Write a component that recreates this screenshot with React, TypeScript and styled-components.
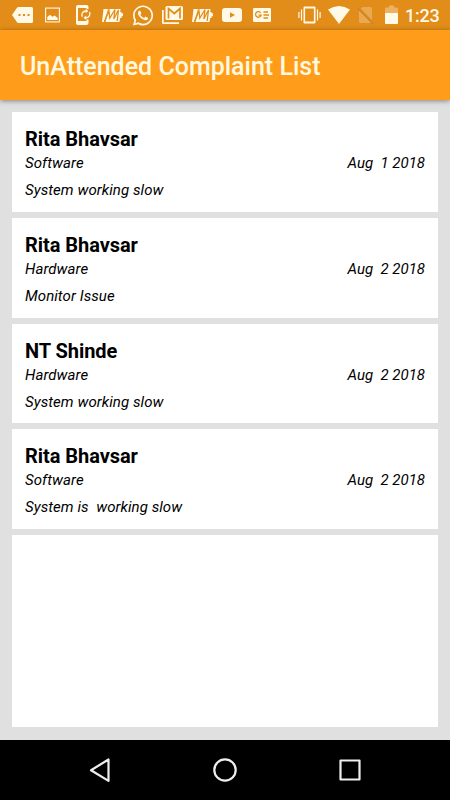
import React from "react";
import styled, { createGlobalStyle } from "styled-components";
import { FaWhatsapp } from "react-icons/fa";

const GlobalStyle = createGlobalStyle`
  * { box-sizing: border-box; }
  body { margin: 0; background: #e0e0e0; font-family: Roboto, sans-serif; }
`;

const Screen = styled.div`
  width: 450px;
  height: 800px;
  display: flex;
  flex-direction: column;
  background: #e0e0e0;
  overflow: hidden;
`;

const StatusBar = styled.div`
  flex: none;
  height: 30px;
  display: flex;
  align-items: center;
  padding-left: 12px;
  background: #e28d19;
  color: #fff9e8;
`;

const StatusIcon = styled.svg<{ $w: number; $gap?: number }>`
  flex: none;
  display: block;
  width: ${(p) => p.$w}px;
  height: 30px;
  margin-left: ${(p) => p.$gap ?? 0}px;
  fill: currentColor;
`;

const WhatsAppIcon = styled(FaWhatsapp)`
  flex: none;
  width: 22px;
  height: 23px;
  margin-left: 8px;
`;

const Clock = styled.div`
  margin-left: 7px;
  padding-top: 2px;
  font-size: 18px;
  line-height: 28px;
  font-weight: 500;
  letter-spacing: -0.2px;
  white-space: nowrap;
`;

const AppBar = styled.header`
  flex: none;
  height: 70px;
  display: flex;
  align-items: center;
  padding: 3px 20px 0;
  background: #ff9d1a;
  box-shadow: 0 1px 5px rgba(0, 0, 0, 0.42);
  z-index: 1;
`;

const Title = styled.h1`
  margin: 0;
  font-size: 25px;
  line-height: 30px;
  font-weight: 500;
  color: #fff9e0;
  white-space: nowrap;
`;

const List = styled.main`
  flex: 1;
  display: flex;
  flex-direction: column;
  gap: 6px;
  padding: 12.4px 12.5px 12.6px 12px;
`;

const Card = styled.article`
  flex: none;
  height: 99.6px;
  padding: 15px 12.5px 0 13px;
  background: #fff;
  color: #000;
`;

const EmptyCard = styled.div`
  flex: 1;
  background: #fff;
`;

const Name = styled.h2`
  margin: 0;
  font-size: 20px;
  line-height: 24px;
  font-weight: 700;
  letter-spacing: -0.05px;
`;

const Meta = styled.div`
  display: flex;
  justify-content: space-between;
  margin-top: 1px;
`;

const Detail = styled.span<{ $top?: number; $spacing?: number }>`
  display: block;
  margin-top: ${(p) => p.$top ?? 0}px;
  font-size: 15px;
  line-height: 23px;
  font-style: italic;
  letter-spacing: ${(p) => p.$spacing ?? 0.07}px;
  white-space: pre;
`;

const NavBar = styled.nav`
  flex: none;
  height: 60px;
  display: flex;
  align-items: center;
  justify-content: center;
  gap: 101px;
  background: #000;
`;

const NavIcon = styled.svg`
  width: 24px;
  height: 24px;
  fill: none;
  stroke: #eee;
  stroke-width: 2.2;
  stroke-linejoin: round;
`;

const complaints = [
  { name: "Rita Bhavsar", category: "Software", date: "Aug  1 2018", text: "System working slow" },
  { name: "Rita Bhavsar", category: "Hardware", date: "Aug  2 2018", text: "Monitor Issue" },
  { name: "NT Shinde", category: "Hardware", date: "Aug  2 2018", text: "System working slow" },
  { name: "Rita Bhavsar", category: "Software", date: "Aug  2 2018", text: "System is  working slow" },
];

const BAR = "#e28d19";

const WalletIcon = ({ gap }: { gap: number }) => (
  <StatusIcon $w={22} $gap={gap} viewBox="0 0 22 30">
    <path d="M1.500 9H6L5.200 12 2 22H0zM7 9H18.500l-.3 3h1.300v1.200H21v3h-1.500V18h-1.300l-.8 4H3.500z" />
    <path d="M2.500 21.500 7 11l.8 7L13 9.500l-1.200 9.500L16.500 10l-1.300 11" fill="none" stroke={BAR} strokeWidth="1.250" />
  </StatusIcon>
);

const StatusIcons = () => (
  <>
    <StatusIcon $w={21} viewBox="0 0 21 30">
      <path d="M6.5 7H19.500q1.500 0 1.500 1.500V21.500Q21 23 19.500 23H6.500Q5.500 23 5 22.200L0 15 5 7.800Q5.500 7 6.500 7z" />
      <path d="M6.500 14h2v2h-2zM11 14h2v2h-2zM15.500 14h2v2h-2z" fill={BAR} />
    </StatusIcon>
    <StatusIcon $w={15} $gap={12} viewBox="0 0 15 30">
      <rect x=".6" y="8.100" width="13.800" height="13.800" fill="none" stroke="currentColor" strokeWidth="1.100" />
      <path d="M2.300 20v-3l2.700-2.200 2.400 2 2.300-1.200 3 2.400v2z" />
    </StatusIcon>
    <StatusIcon $w={16} $gap={16} viewBox="0 0 16 30">
      <path fillRule="evenodd" d="M2 5h8.500q2 0 2 2v2H10.500V8H2v13h8.500v-1.500h2V23q0 2-2 2H2q-2 0-2-2V7q0-2 2-2z" />
      <path d="M6.300 16.800A4 4 0 0 1 9.800 11M13.500 12A4 4 0 0 1 10 17.800" fill="none" stroke="currentColor" strokeWidth="1.300" />
      <path d="M9.600 8.700l2.700 2.300-2.700 2.300zM10.200 15.500v4.600L7.500 17.800z" />
    </StatusIcon>
    <WalletIcon gap={10} />
    <WhatsAppIcon />
    <StatusIcon $w={21} $gap={8} viewBox="0 0 21 30">
      <path d="M0 10h1.700v12.300H17V24H1.500Q0 24 0 22.500z" />
      <path d="M5 6h14.500Q21 6 21 7.500v11Q21 20 19.500 20H5Q3.500 20 3.500 18.500v-11Q3.500 6 5 6z" />
      <path d="M6.500 18.500V8.500l5.800 5 5.700-5v10" fill="none" stroke={BAR} strokeWidth="1.700" />
    </StatusIcon>
    <WalletIcon gap={9} />
    <StatusIcon $w={20} $gap={8} viewBox="0 0 20 30">
      <rect y="8" width="20" height="14" rx="3" />
      <path d="M8 12.200v5.600l5-2.800z" fill={BAR} />
    </StatusIcon>
    <StatusIcon $w={18} $gap={11} viewBox="0 0 18 30">
      <rect y="8" width="18" height="14" rx="1.300" />
      <path d="M7.700 12.800A2.800 2.800 0 1 0 8.100 15.200H5.500M10.500 12h4.500M10.500 15h5.500M10.500 18h4.500" fill="none" stroke={BAR} strokeWidth="1.300" />
    </StatusIcon>
    <StatusIcon $w={23} $gap={27} viewBox="0 0 23 30">
      <path fillRule="evenodd" d="M6.500 6.500h10q1 0 1 1v15q0 1-1 1h-10q-1 0-1-1V7.500q0-1 1-1zm.6 2v13h8.800v-13z" />
      <path d="M3.500 9.500v11M.9 12v6M19.500 9.500v11M22.100 12v6" stroke="currentColor" strokeWidth="1.200" />
    </StatusIcon>
    <StatusIcon $w={22} $gap={7} viewBox="0 0 22 30">
      <path d="M0 9.500Q11 2.500 22 9.500L11 24z" />
    </StatusIcon>
    <StatusIcon $w={17} $gap={7} viewBox="0 0 17 30">
      <path d="M5.500 7H13.500Q15 7 15 8.500V21.500Q15 23 13.500 23H3.500Q2 23 2 21.500V10.500z" opacity=".27" />
      <path d="M1 7.300l15.500 16" stroke={BAR} strokeWidth="2.200" />
      <path d="M.5 8l15.500 16" stroke="#c98431" strokeWidth="1.200" />
    </StatusIcon>
    <StatusIcon $w={13} $gap={11} viewBox="0 0 13 30">
      <path d="M4 5.500h5v2h3q1 0 1 1V13H0V8.500q0-1 1-1h3z" opacity=".35" />
      <path d="M0 13h13v10q0 1-1 1H1q-1 0-1-1z" />
    </StatusIcon>
  </>
);

export default function App() {
  return (
    <>
      <GlobalStyle />
      <Screen>
        <StatusBar>
          <StatusIcons />
          <Clock>1:23</Clock>
        </StatusBar>
        <AppBar>
          <Title>UnAttended Complaint List</Title>
        </AppBar>
        <List>
          {complaints.map((c, i) => (
            <Card key={i}>
              <Name>{c.name}</Name>
              <Meta>
                <Detail>{c.category}</Detail>
                <Detail $spacing={0}>{c.date}</Detail>
              </Meta>
              <Detail $top={4}>{c.text}</Detail>
            </Card>
          ))}
          <EmptyCard />
        </List>
        <NavBar>
          <NavIcon viewBox="0 0 24 24">
            <path d="M3 12.200L20.500 1.500v21.400z" />
          </NavIcon>
          <NavIcon viewBox="0 0 24 24">
            <circle cx="12" cy="12" r="10.700" />
          </NavIcon>
          <NavIcon viewBox="0 0 24 24">
            <rect x="2.500" y="2.500" width="19" height="19" />
          </NavIcon>
        </NavBar>
      </Screen>
    </>
  );
}
